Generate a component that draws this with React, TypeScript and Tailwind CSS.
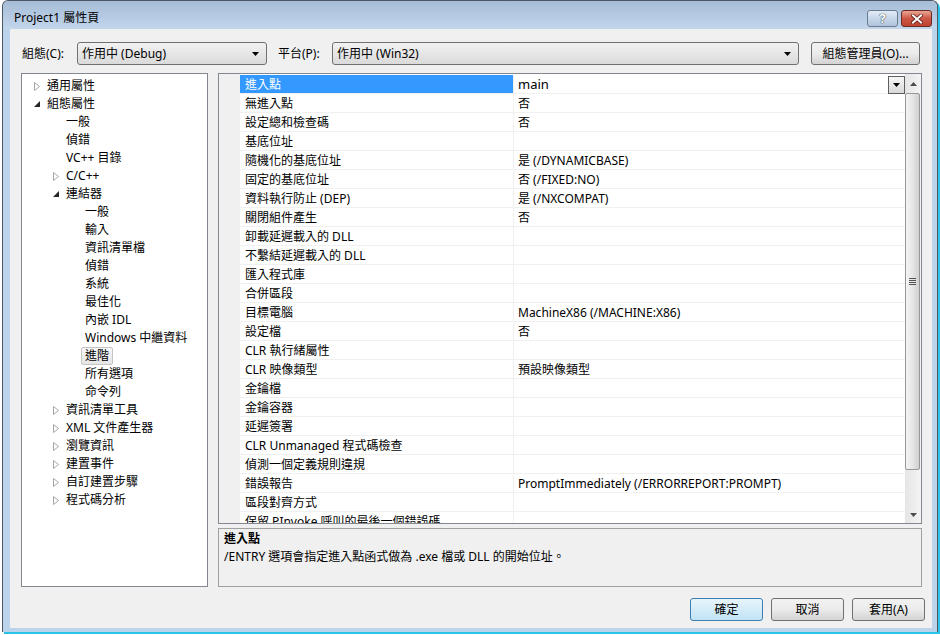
const TREE: { t: string; l: number; a?: 'c' | 'e'; sel?: boolean }[] = [
  { t: '通用屬性', l: 0, a: 'c' },
  { t: '組態屬性', l: 0, a: 'e' },
  { t: '一般', l: 1 },
  { t: '偵錯', l: 1 },
  { t: 'VC++ 目錄', l: 1 },
  { t: 'C/C++', l: 1, a: 'c' },
  { t: '連結器', l: 1, a: 'e' },
  { t: '一般', l: 2 },
  { t: '輸入', l: 2 },
  { t: '資訊清單檔', l: 2 },
  { t: '偵錯', l: 2 },
  { t: '系統', l: 2 },
  { t: '最佳化', l: 2 },
  { t: '內嵌 IDL', l: 2 },
  { t: 'Windows 中繼資料', l: 2 },
  { t: '進階', l: 2, sel: true },
  { t: '所有選項', l: 2 },
  { t: '命令列', l: 2 },
  { t: '資訊清單工具', l: 1, a: 'c' },
  { t: 'XML 文件產生器', l: 1, a: 'c' },
  { t: '瀏覽資訊', l: 1, a: 'c' },
  { t: '建置事件', l: 1, a: 'c' },
  { t: '自訂建置步驟', l: 1, a: 'c' },
  { t: '程式碼分析', l: 1, a: 'c' },
];

const INDENT = ['pl-[12px]', 'pl-[31px]', 'pl-[50px]'];

const ROWS: [string, string][] = [
  ['進入點', 'main'],
  ['無進入點', '否'],
  ['設定總和檢查碼', '否'],
  ['基底位址', ''],
  ['隨機化的基底位址', '是 (/DYNAMICBASE)'],
  ['固定的基底位址', '否 (/FIXED:NO)'],
  ['資料執行防止 (DEP)', '是 (/NXCOMPAT)'],
  ['關閉組件產生', '否'],
  ['卸載延遲載入的 DLL', ''],
  ['不繫結延遲載入的 DLL', ''],
  ['匯入程式庫', ''],
  ['合併區段', ''],
  ['目標電腦', 'MachineX86 (/MACHINE:X86)'],
  ['設定檔', '否'],
  ['CLR 執行緒屬性', ''],
  ['CLR 映像類型', '預設映像類型'],
  ['金鑰檔', ''],
  ['金鑰容器', ''],
  ['延遲簽署', ''],
  ['CLR Unmanaged 程式碼檢查', ''],
  ['偵測一個定義規則違規', ''],
  ['錯誤報告', 'PromptImmediately (/ERRORREPORT:PROMPT)'],
  ['區段對齊方式', ''],
  ['保留 PInvoke 呼叫的最後一個錯誤碼', ''],
];

function DownTri() {
  return (
    <svg width="7" height="4" viewBox="0 0 7 4">
      <polygon points="0,0 7,0 3.5,4" fill="#000" />
    </svg>
  );
}

function Arrow({ kind }: { kind?: 'c' | 'e' }) {
  if (kind === 'c')
    return (
      <svg width="6" height="9" viewBox="0 0 6 9">
        <polygon points="0.5,0.5 5.5,4.5 0.5,8.5" fill="#fff" stroke="#a6a6a6" />
      </svg>
    );
  if (kind === 'e')
    return (
      <svg width="6" height="6" viewBox="0 0 6 6">
        <polygon points="6,0 6,6 0,6" fill="#262626" />
      </svg>
    );
  return null;
}

function Combo({ text, w }: { text: string; w: string }) {
  return (
    <div className={`${w} h-[23px] rounded-[3px] border border-[#707070] bg-gradient-to-b from-[#f2f2f2] to-[#dadada] flex items-center pl-[4px] pr-[7px]`}>
      <span className="flex-1">{text}</span>
      <DownTri />
    </div>
  );
}

function Btn({ label, primary }: { label: string; primary?: boolean }) {
  return (
    <div
      className={
        primary
          ? 'w-[73px] h-[23px] rounded-[3px] border border-[#3c7fb1] bg-gradient-to-b from-[#e8f5fc] to-[#c0e3f6] flex items-center justify-center'
          : 'w-[73px] h-[23px] rounded-[3px] border border-[#707070] bg-gradient-to-b from-[#f2f2f2] via-[#ebebeb] to-[#d3d3d3] flex items-center justify-center'
      }
    >
      {label}
    </div>
  );
}

export default function App() {
  return (
    <div className="w-[940px] h-[635px] bg-white pl-[2px] font-['Noto_Sans','Noto_Sans_CJK_TC',sans-serif] text-[12px] text-black leading-none">
      <div className="w-[936px] h-[632px] flex flex-col border-l border-t border-r border-[#4d5662] rounded-t-[6px] bg-[#bcd3ec] shadow-[2px_2px_0_#2ac4e6]">
        {/* title bar */}
        <div className="h-[28px] rounded-t-[6px] bg-gradient-to-b from-[#a6bcd6] to-[#c2d6ec] flex items-start pl-[11px] pr-[5px]">
          <span className="mt-[11px] flex-1">Project1 屬性頁</span>
          <div className="mt-[9px] flex gap-[3px]">
            <div className="w-[31px] h-[17px] rounded-[3px] border border-[#6b7c91] bg-gradient-to-b from-[#e3ecf6] via-[#c6d6e9] to-[#b0c4dd] flex items-center justify-center">
              <span className="text-white font-bold text-[13px] [text-shadow:0_0_1px_#233,0_0_1px_#233]">?</span>
            </div>
            <div className="w-[31px] h-[17px] rounded-[3px] border border-[#6b2b24] bg-gradient-to-b from-[#e9a594] via-[#cd5646] to-[#c1422f] flex items-center justify-center">
              <svg width="12" height="10" viewBox="0 0 12 10">
                <path d="M2 1.5 L10 8.5 M10 1.5 L2 8.5" stroke="#5a1c14" strokeWidth="3.6" strokeLinecap="square" />
                <path d="M2 1.5 L10 8.5 M10 1.5 L2 8.5" stroke="#fff" strokeWidth="2" strokeLinecap="square" />
              </svg>
            </div>
          </div>
        </div>

        {/* client area */}
        <div className="ml-[7px] w-[922px] h-[599px] bg-[#f0f0f0] pt-[13px] pl-[11px] flex flex-col">
          <div className="flex items-center h-[23px]">
            <span className="w-[56px] pl-[1px]">組態(C):</span>
            <Combo text="作用中 (Debug)" w="w-[190px]" />
            <span className="w-[54px] ml-[11px]">平台(P):</span>
            <Combo text="作用中 (Win32)" w="w-[467px]" />
            <div className="ml-[12px] w-[109px] h-[23px] rounded-[3px] border border-[#707070] bg-gradient-to-b from-[#f2f2f2] via-[#ebebeb] to-[#d3d3d3] flex items-center justify-center">
              組態管理員(O)...
            </div>
          </div>

          <div className="mt-[8px] flex gap-[10px]">
            {/* tree */}
            <div className="w-[187px] h-[514px] border border-[#828790] bg-white pt-[3px]">
              {TREE.map((n, i) => (
                <div key={i} className={`h-[18px] flex items-center ${INDENT[n.l]}`}>
                  <div className="w-[13px] flex items-center">
                    <Arrow kind={n.a} />
                  </div>
                  {n.sel ? (
                    <span className="ml-[-4px] px-[3px] h-[18px] flex items-center rounded-[2px] border border-[#c4c4c4] bg-gradient-to-b from-[#f6f6f6] to-[#e6e6e6]">
                      {n.t}
                    </span>
                  ) : (
                    <span>{n.t}</span>
                  )}
                </div>
              ))}
            </div>

            <div className="w-[704px] flex flex-col gap-[4px]">
              {/* property grid */}
              <div className="h-[451px] border border-[#828790] bg-white flex overflow-hidden">
                <div className="w-[21px] bg-[#f0f0f0]" />
                <div className="flex-1 pt-[1px] flex flex-col overflow-hidden">
                  {ROWS.map(([k, v], i) => (
                    <div key={i} className="h-[19px] shrink-0 flex border-b border-[#f0f0f0]">
                      <div
                        className={
                          i === 0
                            ? 'w-[274px] border-r border-[#f0f0f0] bg-[#3399ff] text-white pl-[5px] pt-[1px] flex items-center'
                            : 'w-[274px] border-r border-[#f0f0f0] pl-[5px] pt-[1px] flex items-center'
                        }
                      >
                        {k}
                      </div>
                      <div className="flex-1 pl-[4px] flex items-center">
                        {i === 0 ? (
                          <>
                            <span className="flex-1 pt-[1px] text-[13px]">{v}</span>
                            <div className="w-[17px] h-[18px] mt-[1px] border border-[#5e5e5e] bg-gradient-to-b from-[#f6f6f6] to-[#d9d9d9] flex items-center justify-center">
                              <DownTri />
                            </div>
                          </>
                        ) : (
                          <span className="pt-[1px]">{v}</span>
                        )}
                      </div>
                    </div>
                  ))}
                </div>
                {/* scrollbar */}
                <div className="w-[16px] bg-gradient-to-r from-[#e5e5e5] to-[#f4f4f4] flex flex-col">
                  <div className="h-[19px] flex items-center justify-center">
                    <svg width="7" height="4" viewBox="0 0 7 4">
                      <polygon points="0,4 7,4 3.5,0" fill="#4d4d4d" />
                    </svg>
                  </div>
                  <div className="h-[377px] mr-[1px] rounded-[2px] border border-[#979797] bg-gradient-to-r from-[#f4f4f4] via-[#e6e6e6] to-[#d0d0d0] flex items-center justify-center">
                    <div className="flex flex-col gap-[1px]">
                      <div className="w-[7px] h-[1px] bg-[#555]" />
                      <div className="w-[7px] h-[1px] bg-[#555]" />
                      <div className="w-[7px] h-[1px] bg-[#555]" />
                      <div className="w-[7px] h-[1px] bg-[#555]" />
                    </div>
                  </div>
                  <div className="flex-1 flex items-end justify-center pb-[6px]">
                    <svg width="7" height="4" viewBox="0 0 7 4">
                      <polygon points="0,0 7,0 3.5,4" fill="#4d4d4d" />
                    </svg>
                  </div>
                </div>
              </div>

              {/* description */}
              <div className="h-[59px] border border-[#a0a0a0] bg-[#f0f0f0] pl-[5px] pt-[4px] flex flex-col gap-[6px]">
                <span className="font-bold">進入點</span>
                <span>/ENTRY 選項會指定進入點函式做為 .exe 檔或 DLL 的開始位址。</span>
              </div>
            </div>
          </div>

          <div className="mt-[11px] w-[904px] flex justify-end gap-[8px]">
            <Btn label="確定" primary />
            <Btn label="取消" />
            <Btn label="套用(A)" />
          </div>
        </div>
      </div>
    </div>
  );
}
